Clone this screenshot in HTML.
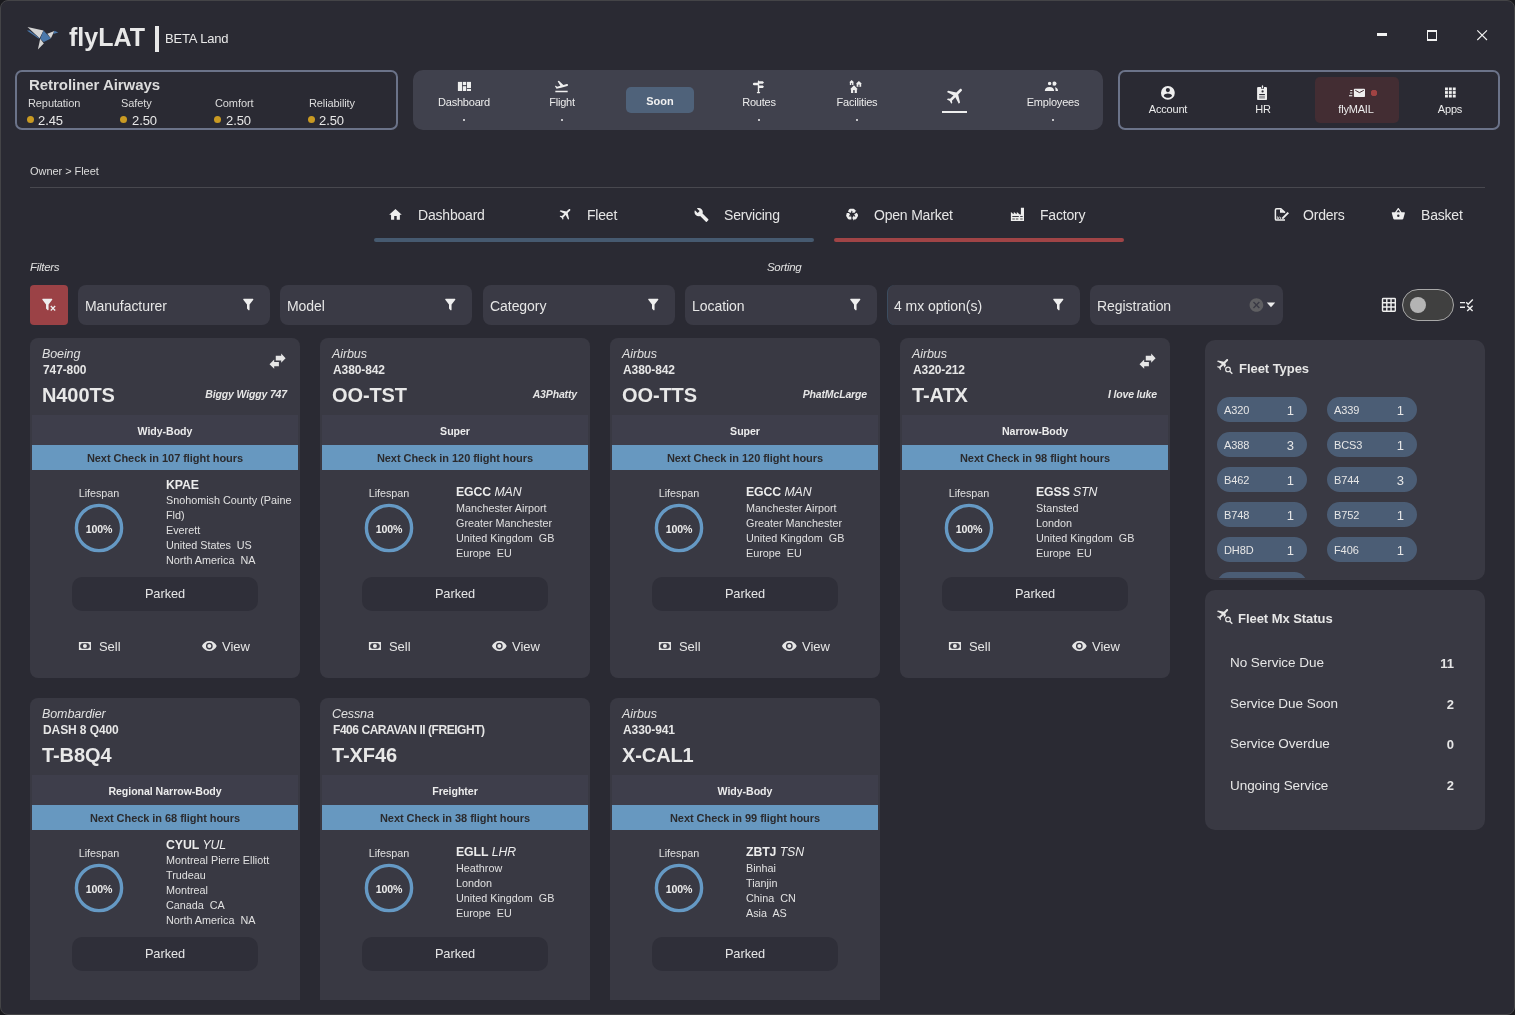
<!DOCTYPE html>
<html><head><meta charset="utf-8"><style>
html,body{margin:0;padding:0;width:1515px;height:1015px;overflow:hidden;background:#1a1a1e;}
.win{position:absolute;left:0;top:0;width:1513px;height:1013px;border:1px solid #444447;border-radius:8px;background:#2a2a33;overflow:hidden;}
.t{position:absolute;white-space:nowrap;line-height:1;font-family:"Liberation Sans",sans-serif;will-change:transform;}
.r{position:absolute;}
svg.r{overflow:visible}
</style></head><body><div class="win"><div class="r" style="left:-1px;top:-1px;width:1515px;height:1015px">
<div class='t' style='left:69.40px;top:25.44px;font-size:25px;font-weight:bold;font-style:normal;color:#e8e8e8;letter-spacing:0px;'>flyLAT</div>
<div class='r' style='left:155px;top:26px;width:4px;height:26px;background:#e8e8e8;border-radius:0px;'></div>
<div class='t' style='left:164.50px;top:32.00px;font-size:13px;font-weight:normal;font-style:normal;color:#e8e8e8;letter-spacing:-0.15px;'>BETA Land</div>
<div class='r' style='left:1377px;top:33px;width:10px;height:3px;background:#f0f0f0;border-radius:0px;'></div>
<div class='r' style='left:1427px;top:30px;width:8px;height:8px;border:1px solid #f0f0f0;border-top-width:2px'></div>
<div class='r' style='left:15px;top:70px;width:379px;height:56px;border:2px solid #6b7389;border-radius:7px'></div>
<div class='t' style='left:28.50px;top:77.10px;font-size:15px;font-weight:bold;font-style:normal;color:#dcdcdc;letter-spacing:-0.05px;'>Retroliner Airways</div>
<div class='t' style='left:27.60px;top:97.69px;font-size:11px;font-weight:normal;font-style:normal;color:#dcdcdc;letter-spacing:-0.1px;'>Reputation</div>
<div class='r' style='left:27.0px;top:116px;width:7.0px;height:7px;background:#c99a22;border-radius:4px;'></div>
<div class='t' style='left:38.40px;top:113.70px;font-size:13px;font-weight:normal;font-style:normal;color:#e8e8e8;letter-spacing:-0.1px;'>2.45</div>
<div class='t' style='left:121.00px;top:97.69px;font-size:11px;font-weight:normal;font-style:normal;color:#dcdcdc;letter-spacing:-0.1px;'>Safety</div>
<div class='r' style='left:120.4px;top:116px;width:7.0px;height:7px;background:#c99a22;border-radius:4px;'></div>
<div class='t' style='left:131.80px;top:113.70px;font-size:13px;font-weight:normal;font-style:normal;color:#e8e8e8;letter-spacing:-0.1px;'>2.50</div>
<div class='t' style='left:215.00px;top:97.69px;font-size:11px;font-weight:normal;font-style:normal;color:#dcdcdc;letter-spacing:-0.1px;'>Comfort</div>
<div class='r' style='left:214.4px;top:116px;width:7.0px;height:7px;background:#c99a22;border-radius:4px;'></div>
<div class='t' style='left:225.80px;top:113.70px;font-size:13px;font-weight:normal;font-style:normal;color:#e8e8e8;letter-spacing:-0.1px;'>2.50</div>
<div class='t' style='left:308.60px;top:97.69px;font-size:11px;font-weight:normal;font-style:normal;color:#dcdcdc;letter-spacing:-0.1px;'>Reliability</div>
<div class='r' style='left:308.0px;top:116px;width:7.0px;height:7px;background:#c99a22;border-radius:4px;'></div>
<div class='t' style='left:319.40px;top:113.70px;font-size:13px;font-weight:normal;font-style:normal;color:#e8e8e8;letter-spacing:-0.1px;'>2.50</div>
<div class='r' style='left:413px;top:70px;width:690px;height:60px;background:#40414d;border-radius:10px;'></div>
<div class='r' style='left:626px;top:87px;width:68px;height:26px;background:#4f627a;border-radius:5px;'></div>
<div class='t' style='left:360.00px;width:600px;text-align:center;top:95.69px;font-size:11px;font-weight:bold;font-style:normal;color:#f0f0f0;letter-spacing:0px;'>Soon</div>
<div class='t' style='left:164.40px;width:600px;text-align:center;top:96.69px;font-size:11px;font-weight:normal;font-style:normal;color:#ececec;letter-spacing:-0.2px;'>Dashboard</div>
<div class='r' style='left:463.4px;top:119px;width:2.0px;height:2px;background:#c4c4c8;border-radius:0px;'></div>
<div class='t' style='left:261.80px;width:600px;text-align:center;top:96.69px;font-size:11px;font-weight:normal;font-style:normal;color:#ececec;letter-spacing:-0.2px;'>Flight</div>
<div class='r' style='left:560.8px;top:119px;width:2.0px;height:2px;background:#c4c4c8;border-radius:0px;'></div>
<div class='t' style='left:458.80px;width:600px;text-align:center;top:96.69px;font-size:11px;font-weight:normal;font-style:normal;color:#ececec;letter-spacing:-0.2px;'>Routes</div>
<div class='r' style='left:757.8px;top:119px;width:2.0px;height:2px;background:#c4c4c8;border-radius:0px;'></div>
<div class='t' style='left:556.50px;width:600px;text-align:center;top:96.69px;font-size:11px;font-weight:normal;font-style:normal;color:#ececec;letter-spacing:-0.2px;'>Facilities</div>
<div class='r' style='left:855.5px;top:119px;width:2.0px;height:2px;background:#c4c4c8;border-radius:0px;'></div>
<div class='t' style='left:752.50px;width:600px;text-align:center;top:96.69px;font-size:11px;font-weight:normal;font-style:normal;color:#ececec;letter-spacing:-0.2px;'>Employees</div>
<div class='r' style='left:1051.5px;top:119px;width:2.0px;height:2px;background:#c4c4c8;border-radius:0px;'></div>
<div class='r' style='left:942px;top:111px;width:25px;height:2px;background:#eeeeee;border-radius:0px;'></div>
<div class='r' style='left:1118px;top:70px;width:378px;height:56px;border:2px solid #6b7389;border-radius:7px'></div>
<div class='r' style='left:1315px;top:77px;width:84px;height:46px;background:#432d33;border-radius:5px;'></div>
<div class='t' style='left:868.00px;width:600px;text-align:center;top:103.69px;font-size:11px;font-weight:normal;font-style:normal;color:#ececec;letter-spacing:-0.2px;'>Account</div>
<div class='t' style='left:962.50px;width:600px;text-align:center;top:103.69px;font-size:11px;font-weight:normal;font-style:normal;color:#ececec;letter-spacing:-0.2px;'>HR</div>
<div class='t' style='left:1056.40px;width:600px;text-align:center;top:103.69px;font-size:11px;font-weight:normal;font-style:normal;color:#ececec;letter-spacing:-0.2px;'>flyMAIL</div>
<div class='t' style='left:1150.30px;width:600px;text-align:center;top:103.69px;font-size:11px;font-weight:normal;font-style:normal;color:#ececec;letter-spacing:-0.2px;'>Apps</div>
<div class='r' style='left:1371px;top:90px;width:6px;height:6px;background:#b54545;border-radius:3px;'></div>
<div class='t' style='left:30.00px;top:166.29px;font-size:11px;font-weight:normal;font-style:normal;color:#dcdcdc;letter-spacing:-0.05px;'>Owner &gt; Fleet</div>
<div class='r' style='left:30px;top:187px;width:1455px;height:1px;background:#48484f;border-radius:0px;'></div>
<div class='t' style='left:417.70px;top:208.15px;font-size:14px;font-weight:normal;font-style:normal;color:#e6e6e6;letter-spacing:-0.2px;'>Dashboard</div>
<div class='t' style='left:586.60px;top:208.15px;font-size:14px;font-weight:normal;font-style:normal;color:#e6e6e6;letter-spacing:-0.2px;'>Fleet</div>
<div class='t' style='left:723.50px;top:208.15px;font-size:14px;font-weight:normal;font-style:normal;color:#e6e6e6;letter-spacing:-0.2px;'>Servicing</div>
<div class='t' style='left:873.70px;top:208.15px;font-size:14px;font-weight:normal;font-style:normal;color:#e6e6e6;letter-spacing:-0.2px;'>Open Market</div>
<div class='t' style='left:1039.60px;top:208.15px;font-size:14px;font-weight:normal;font-style:normal;color:#e6e6e6;letter-spacing:-0.2px;'>Factory</div>
<div class='t' style='left:1303.20px;top:208.15px;font-size:14px;font-weight:normal;font-style:normal;color:#e6e6e6;letter-spacing:-0.2px;'>Orders</div>
<div class='t' style='left:1420.50px;top:208.15px;font-size:14px;font-weight:normal;font-style:normal;color:#e6e6e6;letter-spacing:-0.2px;'>Basket</div>
<div class='r' style='left:374px;top:238.2px;width:440px;height:3.6000000000000227px;background:#465a70;border-radius:2px;'></div>
<div class='r' style='left:834px;top:238.2px;width:290px;height:3.6000000000000227px;background:#a04446;border-radius:2px;'></div>
<div class='t' style='left:30.00px;top:262.27px;font-size:11.5px;font-weight:normal;font-style:italic;color:#e0e0e0;letter-spacing:-0.3px;'>Filters</div>
<div class='t' style='left:767.40px;top:262.27px;font-size:11.5px;font-weight:normal;font-style:italic;color:#e0e0e0;letter-spacing:-0.3px;'>Sorting</div>
<div class='r' style='left:30px;top:285px;width:38px;height:40px;background:#9b4246;border-radius:4px;'></div>
<div class='r' style='left:78px;top:285px;width:192px;height:40px;background:#3a3a45;border-radius:8px;'></div>
<div class='t' style='left:85.20px;top:299.15px;font-size:14px;font-weight:normal;font-style:normal;color:#e6e6e6;letter-spacing:-0.05px;'>Manufacturer</div>
<div class='r' style='left:280px;top:285px;width:192px;height:40px;background:#3a3a45;border-radius:8px;'></div>
<div class='t' style='left:287.20px;top:299.15px;font-size:14px;font-weight:normal;font-style:normal;color:#e6e6e6;letter-spacing:-0.05px;'>Model</div>
<div class='r' style='left:483px;top:285px;width:192px;height:40px;background:#3a3a45;border-radius:8px;'></div>
<div class='t' style='left:490.20px;top:299.15px;font-size:14px;font-weight:normal;font-style:normal;color:#e6e6e6;letter-spacing:-0.05px;'>Category</div>
<div class='r' style='left:685px;top:285px;width:192px;height:40px;background:#3a3a45;border-radius:8px;'></div>
<div class='t' style='left:692.20px;top:299.15px;font-size:14px;font-weight:normal;font-style:normal;color:#e6e6e6;letter-spacing:-0.05px;'>Location</div>
<div class='r' style='left:887px;top:285px;width:193px;height:40px;background:#3a3a45;border-radius:8px;border-left:1px solid #3c4d60;box-sizing:border-box;'></div>
<div class='t' style='left:894.20px;top:299.15px;font-size:14px;font-weight:normal;font-style:normal;color:#e6e6e6;letter-spacing:-0.05px;'>4 mx option(s)</div>
<div class='r' style='left:1090px;top:285px;width:193px;height:40px;background:#3a3a45;border-radius:8px;'></div>
<div class='t' style='left:1097.20px;top:299.15px;font-size:14px;font-weight:normal;font-style:normal;color:#e6e6e6;letter-spacing:-0.05px;'>Registration</div>
<div class='r' style='left:1402px;top:289px;width:50px;height:30px;border:1px solid #a8a8a8;border-radius:16px;background:#404040'></div>
<div class='r' style='left:1410px;top:297px;width:16px;height:16px;background:#b4b4b4;border-radius:8px;'></div>
<div class='r' style='left:30px;top:338px;width:270px;height:340px;background:#393943;border-radius:8px;overflow:hidden'><div class='t' style='left:12.30px;top:10.22px;font-size:12.5px;font-weight:normal;font-style:italic;color:#e0e0e0;letter-spacing:-0.1px;'>Boeing</div><div class='t' style='left:12.70px;top:25.84px;font-size:12px;font-weight:bold;font-style:normal;color:#e6e6e6;letter-spacing:-0.1px;'>747-800</div><div class='t' style='left:11.50px;top:47.07px;font-size:20px;font-weight:bold;font-style:normal;color:#e8e8e8;letter-spacing:-0.1px;'>N400TS</div><div class='t' style='left:-343.00px;width:600px;text-align:right;top:51.11px;font-size:10.5px;font-weight:bold;font-style:italic;color:#e6e6e6;letter-spacing:-0.15px;'>Biggy Wiggy 747</div><div class='r' style='left:2px;top:77px;width:266px;height:30px;background:#3e3e4b;border-radius:0px;'></div><div class='t' style='left:-165.00px;width:600px;text-align:center;top:87.73px;font-size:10.6px;font-weight:bold;font-style:normal;color:#ececec;letter-spacing:-0.05px;'>Widy-Body</div><div class='r' style='left:2px;top:107px;width:266px;height:25px;background:#6798c0;border-radius:0px;'></div><div class='t' style='left:-165.00px;width:600px;text-align:center;top:115.29px;font-size:11px;font-weight:bold;font-style:normal;color:#2b2b2e;letter-spacing:-0.05px;'>Next Check in 107 flight hours</div><div class='t' style='left:-231.30px;width:600px;text-align:center;top:150.46px;font-size:10.8px;font-weight:normal;font-style:normal;color:#e0e0e0;letter-spacing:-0.05px;'>Lifespan</div><svg class='r' style='left:43px;top:164.4px;' width='52' height='52' viewBox='0 0 52 52'><circle cx='26' cy='26' r='22.6' stroke='#6599c4' stroke-width='3.4' fill='none'/></svg><div class='t' style='left:-231.20px;width:600px;text-align:center;top:186.03px;font-size:10.6px;font-weight:bold;font-style:normal;color:#ececec;letter-spacing:-0.1px;'>100%</div><div class='t' style='left:135.50px;top:140.79px;font-size:12.3px;font-weight:bold;font-style:normal;color:#ececec;letter-spacing:-0.1px;'>KPAE</div><div class='t' style='left:135.50px;top:157.06px;font-size:10.8px;font-weight:normal;font-style:normal;color:#e0e0e0;letter-spacing:0px;'>Snohomish County (Paine</div><div class='t' style='left:135.50px;top:172.06px;font-size:10.8px;font-weight:normal;font-style:normal;color:#e0e0e0;letter-spacing:0px;'>Fld)</div><div class='t' style='left:135.50px;top:187.06px;font-size:10.8px;font-weight:normal;font-style:normal;color:#e0e0e0;letter-spacing:0px;'>Everett</div><div class='t' style='left:135.50px;top:202.06px;font-size:10.8px;font-weight:normal;font-style:normal;color:#e0e0e0;letter-spacing:0px;'>United States&nbsp; US</div><div class='t' style='left:135.50px;top:217.06px;font-size:10.8px;font-weight:normal;font-style:normal;color:#e0e0e0;letter-spacing:0px;'>North America&nbsp; NA</div><div class='r' style='left:42px;top:238.7px;width:186px;height:34.30000000000001px;background:#2f2f39;border-radius:10px;'></div><div class='t' style='left:-165.00px;width:600px;text-align:center;top:250.16px;font-size:12.8px;font-weight:normal;font-style:normal;color:#e6e6e6;letter-spacing:-0.05px;'>Parked</div><div class='t' style='left:68.50px;top:302.00px;font-size:13px;font-weight:normal;font-style:normal;color:#e6e6e6;letter-spacing:-0.05px;'>Sell</div><div class='t' style='left:192.40px;top:302.00px;font-size:13px;font-weight:normal;font-style:normal;color:#e6e6e6;letter-spacing:-0.05px;'>View</div></div>
<div class='r' style='left:320px;top:338px;width:270px;height:340px;background:#393943;border-radius:8px;overflow:hidden'><div class='t' style='left:12.30px;top:10.22px;font-size:12.5px;font-weight:normal;font-style:italic;color:#e0e0e0;letter-spacing:-0.1px;'>Airbus</div><div class='t' style='left:12.70px;top:25.84px;font-size:12px;font-weight:bold;font-style:normal;color:#e6e6e6;letter-spacing:-0.1px;'>A380-842</div><div class='t' style='left:11.50px;top:47.07px;font-size:20px;font-weight:bold;font-style:normal;color:#e8e8e8;letter-spacing:-0.1px;'>OO-TST</div><div class='t' style='left:-343.00px;width:600px;text-align:right;top:51.11px;font-size:10.5px;font-weight:bold;font-style:italic;color:#e6e6e6;letter-spacing:-0.15px;'>A3Phatty</div><div class='r' style='left:2px;top:77px;width:266px;height:30px;background:#3e3e4b;border-radius:0px;'></div><div class='t' style='left:-165.00px;width:600px;text-align:center;top:87.73px;font-size:10.6px;font-weight:bold;font-style:normal;color:#ececec;letter-spacing:-0.05px;'>Super</div><div class='r' style='left:2px;top:107px;width:266px;height:25px;background:#6798c0;border-radius:0px;'></div><div class='t' style='left:-165.00px;width:600px;text-align:center;top:115.29px;font-size:11px;font-weight:bold;font-style:normal;color:#2b2b2e;letter-spacing:-0.05px;'>Next Check in 120 flight hours</div><div class='t' style='left:-231.30px;width:600px;text-align:center;top:150.46px;font-size:10.8px;font-weight:normal;font-style:normal;color:#e0e0e0;letter-spacing:-0.05px;'>Lifespan</div><svg class='r' style='left:43px;top:164.4px;' width='52' height='52' viewBox='0 0 52 52'><circle cx='26' cy='26' r='22.6' stroke='#6599c4' stroke-width='3.4' fill='none'/></svg><div class='t' style='left:-231.20px;width:600px;text-align:center;top:186.03px;font-size:10.6px;font-weight:bold;font-style:normal;color:#ececec;letter-spacing:-0.1px;'>100%</div><div class='t' style='left:135.50px;top:148.29px;font-size:12.3px;font-weight:bold;font-style:normal;color:#ececec;letter-spacing:-0.1px;'>EGCC&nbsp;<span style='font-weight:normal;font-style:italic'>MAN</span></div><div class='t' style='left:135.50px;top:164.56px;font-size:10.8px;font-weight:normal;font-style:normal;color:#e0e0e0;letter-spacing:0px;'>Manchester Airport</div><div class='t' style='left:135.50px;top:179.56px;font-size:10.8px;font-weight:normal;font-style:normal;color:#e0e0e0;letter-spacing:0px;'>Greater Manchester</div><div class='t' style='left:135.50px;top:194.56px;font-size:10.8px;font-weight:normal;font-style:normal;color:#e0e0e0;letter-spacing:0px;'>United Kingdom&nbsp; GB</div><div class='t' style='left:135.50px;top:209.56px;font-size:10.8px;font-weight:normal;font-style:normal;color:#e0e0e0;letter-spacing:0px;'>Europe&nbsp; EU</div><div class='r' style='left:42px;top:238.7px;width:186px;height:34.30000000000001px;background:#2f2f39;border-radius:10px;'></div><div class='t' style='left:-165.00px;width:600px;text-align:center;top:250.16px;font-size:12.8px;font-weight:normal;font-style:normal;color:#e6e6e6;letter-spacing:-0.05px;'>Parked</div><div class='t' style='left:68.50px;top:302.00px;font-size:13px;font-weight:normal;font-style:normal;color:#e6e6e6;letter-spacing:-0.05px;'>Sell</div><div class='t' style='left:192.40px;top:302.00px;font-size:13px;font-weight:normal;font-style:normal;color:#e6e6e6;letter-spacing:-0.05px;'>View</div></div>
<div class='r' style='left:610px;top:338px;width:270px;height:340px;background:#393943;border-radius:8px;overflow:hidden'><div class='t' style='left:12.30px;top:10.22px;font-size:12.5px;font-weight:normal;font-style:italic;color:#e0e0e0;letter-spacing:-0.1px;'>Airbus</div><div class='t' style='left:12.70px;top:25.84px;font-size:12px;font-weight:bold;font-style:normal;color:#e6e6e6;letter-spacing:-0.1px;'>A380-842</div><div class='t' style='left:11.50px;top:47.07px;font-size:20px;font-weight:bold;font-style:normal;color:#e8e8e8;letter-spacing:-0.1px;'>OO-TTS</div><div class='t' style='left:-343.00px;width:600px;text-align:right;top:51.11px;font-size:10.5px;font-weight:bold;font-style:italic;color:#e6e6e6;letter-spacing:-0.15px;'>PhatMcLarge</div><div class='r' style='left:2px;top:77px;width:266px;height:30px;background:#3e3e4b;border-radius:0px;'></div><div class='t' style='left:-165.00px;width:600px;text-align:center;top:87.73px;font-size:10.6px;font-weight:bold;font-style:normal;color:#ececec;letter-spacing:-0.05px;'>Super</div><div class='r' style='left:2px;top:107px;width:266px;height:25px;background:#6798c0;border-radius:0px;'></div><div class='t' style='left:-165.00px;width:600px;text-align:center;top:115.29px;font-size:11px;font-weight:bold;font-style:normal;color:#2b2b2e;letter-spacing:-0.05px;'>Next Check in 120 flight hours</div><div class='t' style='left:-231.30px;width:600px;text-align:center;top:150.46px;font-size:10.8px;font-weight:normal;font-style:normal;color:#e0e0e0;letter-spacing:-0.05px;'>Lifespan</div><svg class='r' style='left:43px;top:164.4px;' width='52' height='52' viewBox='0 0 52 52'><circle cx='26' cy='26' r='22.6' stroke='#6599c4' stroke-width='3.4' fill='none'/></svg><div class='t' style='left:-231.20px;width:600px;text-align:center;top:186.03px;font-size:10.6px;font-weight:bold;font-style:normal;color:#ececec;letter-spacing:-0.1px;'>100%</div><div class='t' style='left:135.50px;top:148.29px;font-size:12.3px;font-weight:bold;font-style:normal;color:#ececec;letter-spacing:-0.1px;'>EGCC&nbsp;<span style='font-weight:normal;font-style:italic'>MAN</span></div><div class='t' style='left:135.50px;top:164.56px;font-size:10.8px;font-weight:normal;font-style:normal;color:#e0e0e0;letter-spacing:0px;'>Manchester Airport</div><div class='t' style='left:135.50px;top:179.56px;font-size:10.8px;font-weight:normal;font-style:normal;color:#e0e0e0;letter-spacing:0px;'>Greater Manchester</div><div class='t' style='left:135.50px;top:194.56px;font-size:10.8px;font-weight:normal;font-style:normal;color:#e0e0e0;letter-spacing:0px;'>United Kingdom&nbsp; GB</div><div class='t' style='left:135.50px;top:209.56px;font-size:10.8px;font-weight:normal;font-style:normal;color:#e0e0e0;letter-spacing:0px;'>Europe&nbsp; EU</div><div class='r' style='left:42px;top:238.7px;width:186px;height:34.30000000000001px;background:#2f2f39;border-radius:10px;'></div><div class='t' style='left:-165.00px;width:600px;text-align:center;top:250.16px;font-size:12.8px;font-weight:normal;font-style:normal;color:#e6e6e6;letter-spacing:-0.05px;'>Parked</div><div class='t' style='left:68.50px;top:302.00px;font-size:13px;font-weight:normal;font-style:normal;color:#e6e6e6;letter-spacing:-0.05px;'>Sell</div><div class='t' style='left:192.40px;top:302.00px;font-size:13px;font-weight:normal;font-style:normal;color:#e6e6e6;letter-spacing:-0.05px;'>View</div></div>
<div class='r' style='left:900px;top:338px;width:270px;height:340px;background:#393943;border-radius:8px;overflow:hidden'><div class='t' style='left:12.30px;top:10.22px;font-size:12.5px;font-weight:normal;font-style:italic;color:#e0e0e0;letter-spacing:-0.1px;'>Airbus</div><div class='t' style='left:12.70px;top:25.84px;font-size:12px;font-weight:bold;font-style:normal;color:#e6e6e6;letter-spacing:-0.1px;'>A320-212</div><div class='t' style='left:11.50px;top:47.07px;font-size:20px;font-weight:bold;font-style:normal;color:#e8e8e8;letter-spacing:-0.1px;'>T-ATX</div><div class='t' style='left:-343.00px;width:600px;text-align:right;top:51.11px;font-size:10.5px;font-weight:bold;font-style:italic;color:#e6e6e6;letter-spacing:-0.15px;'>I love luke</div><div class='r' style='left:2px;top:77px;width:266px;height:30px;background:#3e3e4b;border-radius:0px;'></div><div class='t' style='left:-165.00px;width:600px;text-align:center;top:87.73px;font-size:10.6px;font-weight:bold;font-style:normal;color:#ececec;letter-spacing:-0.05px;'>Narrow-Body</div><div class='r' style='left:2px;top:107px;width:266px;height:25px;background:#6798c0;border-radius:0px;'></div><div class='t' style='left:-165.00px;width:600px;text-align:center;top:115.29px;font-size:11px;font-weight:bold;font-style:normal;color:#2b2b2e;letter-spacing:-0.05px;'>Next Check in 98 flight hours</div><div class='t' style='left:-231.30px;width:600px;text-align:center;top:150.46px;font-size:10.8px;font-weight:normal;font-style:normal;color:#e0e0e0;letter-spacing:-0.05px;'>Lifespan</div><svg class='r' style='left:43px;top:164.4px;' width='52' height='52' viewBox='0 0 52 52'><circle cx='26' cy='26' r='22.6' stroke='#6599c4' stroke-width='3.4' fill='none'/></svg><div class='t' style='left:-231.20px;width:600px;text-align:center;top:186.03px;font-size:10.6px;font-weight:bold;font-style:normal;color:#ececec;letter-spacing:-0.1px;'>100%</div><div class='t' style='left:135.50px;top:148.29px;font-size:12.3px;font-weight:bold;font-style:normal;color:#ececec;letter-spacing:-0.1px;'>EGSS&nbsp;<span style='font-weight:normal;font-style:italic'>STN</span></div><div class='t' style='left:135.50px;top:164.56px;font-size:10.8px;font-weight:normal;font-style:normal;color:#e0e0e0;letter-spacing:0px;'>Stansted</div><div class='t' style='left:135.50px;top:179.56px;font-size:10.8px;font-weight:normal;font-style:normal;color:#e0e0e0;letter-spacing:0px;'>London</div><div class='t' style='left:135.50px;top:194.56px;font-size:10.8px;font-weight:normal;font-style:normal;color:#e0e0e0;letter-spacing:0px;'>United Kingdom&nbsp; GB</div><div class='t' style='left:135.50px;top:209.56px;font-size:10.8px;font-weight:normal;font-style:normal;color:#e0e0e0;letter-spacing:0px;'>Europe&nbsp; EU</div><div class='r' style='left:42px;top:238.7px;width:186px;height:34.30000000000001px;background:#2f2f39;border-radius:10px;'></div><div class='t' style='left:-165.00px;width:600px;text-align:center;top:250.16px;font-size:12.8px;font-weight:normal;font-style:normal;color:#e6e6e6;letter-spacing:-0.05px;'>Parked</div><div class='t' style='left:68.50px;top:302.00px;font-size:13px;font-weight:normal;font-style:normal;color:#e6e6e6;letter-spacing:-0.05px;'>Sell</div><div class='t' style='left:192.40px;top:302.00px;font-size:13px;font-weight:normal;font-style:normal;color:#e6e6e6;letter-spacing:-0.05px;'>View</div></div>
<div class='r' style='left:30px;top:698px;width:270px;height:302px;background:#393943;border-radius:8px 8px 0 0;overflow:hidden'><div class='t' style='left:12.30px;top:10.22px;font-size:12.5px;font-weight:normal;font-style:italic;color:#e0e0e0;letter-spacing:-0.1px;'>Bombardier</div><div class='t' style='left:12.70px;top:25.84px;font-size:12px;font-weight:bold;font-style:normal;color:#e6e6e6;letter-spacing:-0.1px;'>DASH 8 Q400</div><div class='t' style='left:11.50px;top:47.07px;font-size:20px;font-weight:bold;font-style:normal;color:#e8e8e8;letter-spacing:-0.1px;'>T-B8Q4</div><div class='r' style='left:2px;top:77px;width:266px;height:30px;background:#3e3e4b;border-radius:0px;'></div><div class='t' style='left:-165.00px;width:600px;text-align:center;top:87.73px;font-size:10.6px;font-weight:bold;font-style:normal;color:#ececec;letter-spacing:-0.05px;'>Regional Narrow-Body</div><div class='r' style='left:2px;top:107px;width:266px;height:25px;background:#6798c0;border-radius:0px;'></div><div class='t' style='left:-165.00px;width:600px;text-align:center;top:115.29px;font-size:11px;font-weight:bold;font-style:normal;color:#2b2b2e;letter-spacing:-0.05px;'>Next Check in 68 flight hours</div><div class='t' style='left:-231.30px;width:600px;text-align:center;top:150.46px;font-size:10.8px;font-weight:normal;font-style:normal;color:#e0e0e0;letter-spacing:-0.05px;'>Lifespan</div><svg class='r' style='left:43px;top:164.4px;' width='52' height='52' viewBox='0 0 52 52'><circle cx='26' cy='26' r='22.6' stroke='#6599c4' stroke-width='3.4' fill='none'/></svg><div class='t' style='left:-231.20px;width:600px;text-align:center;top:186.03px;font-size:10.6px;font-weight:bold;font-style:normal;color:#ececec;letter-spacing:-0.1px;'>100%</div><div class='t' style='left:135.50px;top:140.79px;font-size:12.3px;font-weight:bold;font-style:normal;color:#ececec;letter-spacing:-0.1px;'>CYUL&nbsp;<span style='font-weight:normal;font-style:italic'>YUL</span></div><div class='t' style='left:135.50px;top:157.06px;font-size:10.8px;font-weight:normal;font-style:normal;color:#e0e0e0;letter-spacing:0px;'>Montreal Pierre Elliott</div><div class='t' style='left:135.50px;top:172.06px;font-size:10.8px;font-weight:normal;font-style:normal;color:#e0e0e0;letter-spacing:0px;'>Trudeau</div><div class='t' style='left:135.50px;top:187.06px;font-size:10.8px;font-weight:normal;font-style:normal;color:#e0e0e0;letter-spacing:0px;'>Montreal</div><div class='t' style='left:135.50px;top:202.06px;font-size:10.8px;font-weight:normal;font-style:normal;color:#e0e0e0;letter-spacing:0px;'>Canada&nbsp; CA</div><div class='t' style='left:135.50px;top:217.06px;font-size:10.8px;font-weight:normal;font-style:normal;color:#e0e0e0;letter-spacing:0px;'>North America&nbsp; NA</div><div class='r' style='left:42px;top:238.7px;width:186px;height:34.30000000000001px;background:#2f2f39;border-radius:10px;'></div><div class='t' style='left:-165.00px;width:600px;text-align:center;top:250.16px;font-size:12.8px;font-weight:normal;font-style:normal;color:#e6e6e6;letter-spacing:-0.05px;'>Parked</div><div class='t' style='left:68.50px;top:302.00px;font-size:13px;font-weight:normal;font-style:normal;color:#e6e6e6;letter-spacing:-0.05px;'>Sell</div><div class='t' style='left:192.40px;top:302.00px;font-size:13px;font-weight:normal;font-style:normal;color:#e6e6e6;letter-spacing:-0.05px;'>View</div></div>
<div class='r' style='left:320px;top:698px;width:270px;height:302px;background:#393943;border-radius:8px 8px 0 0;overflow:hidden'><div class='t' style='left:12.30px;top:10.22px;font-size:12.5px;font-weight:normal;font-style:italic;color:#e0e0e0;letter-spacing:-0.1px;'>Cessna</div><div class='t' style='left:12.70px;top:25.84px;font-size:12px;font-weight:bold;font-style:normal;color:#e6e6e6;letter-spacing:-0.45px;'>F406 CARAVAN II (FREIGHT)</div><div class='t' style='left:11.50px;top:47.07px;font-size:20px;font-weight:bold;font-style:normal;color:#e8e8e8;letter-spacing:-0.1px;'>T-XF46</div><div class='r' style='left:2px;top:77px;width:266px;height:30px;background:#3e3e4b;border-radius:0px;'></div><div class='t' style='left:-165.00px;width:600px;text-align:center;top:87.73px;font-size:10.6px;font-weight:bold;font-style:normal;color:#ececec;letter-spacing:-0.05px;'>Freighter</div><div class='r' style='left:2px;top:107px;width:266px;height:25px;background:#6798c0;border-radius:0px;'></div><div class='t' style='left:-165.00px;width:600px;text-align:center;top:115.29px;font-size:11px;font-weight:bold;font-style:normal;color:#2b2b2e;letter-spacing:-0.05px;'>Next Check in 38 flight hours</div><div class='t' style='left:-231.30px;width:600px;text-align:center;top:150.46px;font-size:10.8px;font-weight:normal;font-style:normal;color:#e0e0e0;letter-spacing:-0.05px;'>Lifespan</div><svg class='r' style='left:43px;top:164.4px;' width='52' height='52' viewBox='0 0 52 52'><circle cx='26' cy='26' r='22.6' stroke='#6599c4' stroke-width='3.4' fill='none'/></svg><div class='t' style='left:-231.20px;width:600px;text-align:center;top:186.03px;font-size:10.6px;font-weight:bold;font-style:normal;color:#ececec;letter-spacing:-0.1px;'>100%</div><div class='t' style='left:135.50px;top:148.29px;font-size:12.3px;font-weight:bold;font-style:normal;color:#ececec;letter-spacing:-0.1px;'>EGLL&nbsp;<span style='font-weight:normal;font-style:italic'>LHR</span></div><div class='t' style='left:135.50px;top:164.56px;font-size:10.8px;font-weight:normal;font-style:normal;color:#e0e0e0;letter-spacing:0px;'>Heathrow</div><div class='t' style='left:135.50px;top:179.56px;font-size:10.8px;font-weight:normal;font-style:normal;color:#e0e0e0;letter-spacing:0px;'>London</div><div class='t' style='left:135.50px;top:194.56px;font-size:10.8px;font-weight:normal;font-style:normal;color:#e0e0e0;letter-spacing:0px;'>United Kingdom&nbsp; GB</div><div class='t' style='left:135.50px;top:209.56px;font-size:10.8px;font-weight:normal;font-style:normal;color:#e0e0e0;letter-spacing:0px;'>Europe&nbsp; EU</div><div class='r' style='left:42px;top:238.7px;width:186px;height:34.30000000000001px;background:#2f2f39;border-radius:10px;'></div><div class='t' style='left:-165.00px;width:600px;text-align:center;top:250.16px;font-size:12.8px;font-weight:normal;font-style:normal;color:#e6e6e6;letter-spacing:-0.05px;'>Parked</div><div class='t' style='left:68.50px;top:302.00px;font-size:13px;font-weight:normal;font-style:normal;color:#e6e6e6;letter-spacing:-0.05px;'>Sell</div><div class='t' style='left:192.40px;top:302.00px;font-size:13px;font-weight:normal;font-style:normal;color:#e6e6e6;letter-spacing:-0.05px;'>View</div></div>
<div class='r' style='left:610px;top:698px;width:270px;height:302px;background:#393943;border-radius:8px 8px 0 0;overflow:hidden'><div class='t' style='left:12.30px;top:10.22px;font-size:12.5px;font-weight:normal;font-style:italic;color:#e0e0e0;letter-spacing:-0.1px;'>Airbus</div><div class='t' style='left:12.70px;top:25.84px;font-size:12px;font-weight:bold;font-style:normal;color:#e6e6e6;letter-spacing:-0.1px;'>A330-941</div><div class='t' style='left:11.50px;top:47.07px;font-size:20px;font-weight:bold;font-style:normal;color:#e8e8e8;letter-spacing:-0.1px;'>X-CAL1</div><div class='r' style='left:2px;top:77px;width:266px;height:30px;background:#3e3e4b;border-radius:0px;'></div><div class='t' style='left:-165.00px;width:600px;text-align:center;top:87.73px;font-size:10.6px;font-weight:bold;font-style:normal;color:#ececec;letter-spacing:-0.05px;'>Widy-Body</div><div class='r' style='left:2px;top:107px;width:266px;height:25px;background:#6798c0;border-radius:0px;'></div><div class='t' style='left:-165.00px;width:600px;text-align:center;top:115.29px;font-size:11px;font-weight:bold;font-style:normal;color:#2b2b2e;letter-spacing:-0.05px;'>Next Check in 99 flight hours</div><div class='t' style='left:-231.30px;width:600px;text-align:center;top:150.46px;font-size:10.8px;font-weight:normal;font-style:normal;color:#e0e0e0;letter-spacing:-0.05px;'>Lifespan</div><svg class='r' style='left:43px;top:164.4px;' width='52' height='52' viewBox='0 0 52 52'><circle cx='26' cy='26' r='22.6' stroke='#6599c4' stroke-width='3.4' fill='none'/></svg><div class='t' style='left:-231.20px;width:600px;text-align:center;top:186.03px;font-size:10.6px;font-weight:bold;font-style:normal;color:#ececec;letter-spacing:-0.1px;'>100%</div><div class='t' style='left:135.50px;top:148.29px;font-size:12.3px;font-weight:bold;font-style:normal;color:#ececec;letter-spacing:-0.1px;'>ZBTJ&nbsp;<span style='font-weight:normal;font-style:italic'>TSN</span></div><div class='t' style='left:135.50px;top:164.56px;font-size:10.8px;font-weight:normal;font-style:normal;color:#e0e0e0;letter-spacing:0px;'>Binhai</div><div class='t' style='left:135.50px;top:179.56px;font-size:10.8px;font-weight:normal;font-style:normal;color:#e0e0e0;letter-spacing:0px;'>Tianjin</div><div class='t' style='left:135.50px;top:194.56px;font-size:10.8px;font-weight:normal;font-style:normal;color:#e0e0e0;letter-spacing:0px;'>China&nbsp; CN</div><div class='t' style='left:135.50px;top:209.56px;font-size:10.8px;font-weight:normal;font-style:normal;color:#e0e0e0;letter-spacing:0px;'>Asia&nbsp; AS</div><div class='r' style='left:42px;top:238.7px;width:186px;height:34.30000000000001px;background:#2f2f39;border-radius:10px;'></div><div class='t' style='left:-165.00px;width:600px;text-align:center;top:250.16px;font-size:12.8px;font-weight:normal;font-style:normal;color:#e6e6e6;letter-spacing:-0.05px;'>Parked</div><div class='t' style='left:68.50px;top:302.00px;font-size:13px;font-weight:normal;font-style:normal;color:#e6e6e6;letter-spacing:-0.05px;'>Sell</div><div class='t' style='left:192.40px;top:302.00px;font-size:13px;font-weight:normal;font-style:normal;color:#e6e6e6;letter-spacing:-0.05px;'>View</div></div>
<div class='r' style='left:1205px;top:340px;width:280px;height:240px;background:#393943;border-radius:10px;'></div>
<div class='t' style='left:1238.50px;top:362.00px;font-size:13px;font-weight:bold;font-style:normal;color:#e6e6e6;letter-spacing:-0.05px;'>Fleet Types</div>
<div class='r' style='left:1217px;top:397px;width:90px;height:25px;background:#4b5d75;border-radius:12.5px;'></div>
<div class='t' style='left:1224.00px;top:404.69px;font-size:11px;font-weight:normal;font-style:normal;color:#e6e6e6;letter-spacing:-0.1px;'>A320</div>
<div class='t' style='left:694.00px;width:600px;text-align:right;top:403.70px;font-size:13px;font-weight:normal;font-style:normal;color:#e6e6e6;letter-spacing:0px;'>1</div>
<div class='r' style='left:1327px;top:397px;width:90px;height:25px;background:#4b5d75;border-radius:12.5px;'></div>
<div class='t' style='left:1334.00px;top:404.69px;font-size:11px;font-weight:normal;font-style:normal;color:#e6e6e6;letter-spacing:-0.1px;'>A339</div>
<div class='t' style='left:804.00px;width:600px;text-align:right;top:403.70px;font-size:13px;font-weight:normal;font-style:normal;color:#e6e6e6;letter-spacing:0px;'>1</div>
<div class='r' style='left:1217px;top:432px;width:90px;height:25px;background:#4b5d75;border-radius:12.5px;'></div>
<div class='t' style='left:1224.00px;top:439.69px;font-size:11px;font-weight:normal;font-style:normal;color:#e6e6e6;letter-spacing:-0.1px;'>A388</div>
<div class='t' style='left:694.00px;width:600px;text-align:right;top:438.70px;font-size:13px;font-weight:normal;font-style:normal;color:#e6e6e6;letter-spacing:0px;'>3</div>
<div class='r' style='left:1327px;top:432px;width:90px;height:25px;background:#4b5d75;border-radius:12.5px;'></div>
<div class='t' style='left:1334.00px;top:439.69px;font-size:11px;font-weight:normal;font-style:normal;color:#e6e6e6;letter-spacing:-0.1px;'>BCS3</div>
<div class='t' style='left:804.00px;width:600px;text-align:right;top:438.70px;font-size:13px;font-weight:normal;font-style:normal;color:#e6e6e6;letter-spacing:0px;'>1</div>
<div class='r' style='left:1217px;top:467px;width:90px;height:25px;background:#4b5d75;border-radius:12.5px;'></div>
<div class='t' style='left:1224.00px;top:474.69px;font-size:11px;font-weight:normal;font-style:normal;color:#e6e6e6;letter-spacing:-0.1px;'>B462</div>
<div class='t' style='left:694.00px;width:600px;text-align:right;top:473.70px;font-size:13px;font-weight:normal;font-style:normal;color:#e6e6e6;letter-spacing:0px;'>1</div>
<div class='r' style='left:1327px;top:467px;width:90px;height:25px;background:#4b5d75;border-radius:12.5px;'></div>
<div class='t' style='left:1334.00px;top:474.69px;font-size:11px;font-weight:normal;font-style:normal;color:#e6e6e6;letter-spacing:-0.1px;'>B744</div>
<div class='t' style='left:804.00px;width:600px;text-align:right;top:473.70px;font-size:13px;font-weight:normal;font-style:normal;color:#e6e6e6;letter-spacing:0px;'>3</div>
<div class='r' style='left:1217px;top:502px;width:90px;height:25px;background:#4b5d75;border-radius:12.5px;'></div>
<div class='t' style='left:1224.00px;top:509.69px;font-size:11px;font-weight:normal;font-style:normal;color:#e6e6e6;letter-spacing:-0.1px;'>B748</div>
<div class='t' style='left:694.00px;width:600px;text-align:right;top:508.70px;font-size:13px;font-weight:normal;font-style:normal;color:#e6e6e6;letter-spacing:0px;'>1</div>
<div class='r' style='left:1327px;top:502px;width:90px;height:25px;background:#4b5d75;border-radius:12.5px;'></div>
<div class='t' style='left:1334.00px;top:509.69px;font-size:11px;font-weight:normal;font-style:normal;color:#e6e6e6;letter-spacing:-0.1px;'>B752</div>
<div class='t' style='left:804.00px;width:600px;text-align:right;top:508.70px;font-size:13px;font-weight:normal;font-style:normal;color:#e6e6e6;letter-spacing:0px;'>1</div>
<div class='r' style='left:1217px;top:537px;width:90px;height:25px;background:#4b5d75;border-radius:12.5px;'></div>
<div class='t' style='left:1224.00px;top:544.69px;font-size:11px;font-weight:normal;font-style:normal;color:#e6e6e6;letter-spacing:-0.1px;'>DH8D</div>
<div class='t' style='left:694.00px;width:600px;text-align:right;top:543.70px;font-size:13px;font-weight:normal;font-style:normal;color:#e6e6e6;letter-spacing:0px;'>1</div>
<div class='r' style='left:1327px;top:537px;width:90px;height:25px;background:#4b5d75;border-radius:12.5px;'></div>
<div class='t' style='left:1334.00px;top:544.69px;font-size:11px;font-weight:normal;font-style:normal;color:#e6e6e6;letter-spacing:-0.1px;'>F406</div>
<div class='t' style='left:804.00px;width:600px;text-align:right;top:543.70px;font-size:13px;font-weight:normal;font-style:normal;color:#e6e6e6;letter-spacing:0px;'>1</div>
<div class='r' style='left:1217px;top:572px;width:90px;height:6px;overflow:hidden'><div class='r' style='left:0;top:0;width:90px;height:25px;background:#4b5d75;border-radius:12.5px'></div></div>
<div class='r' style='left:1205px;top:590px;width:280px;height:240px;background:#393943;border-radius:10px;'></div>
<div class='t' style='left:1238.40px;top:611.60px;font-size:13px;font-weight:bold;font-style:normal;color:#e6e6e6;letter-spacing:-0.05px;'>Fleet Mx Status</div>
<div class='t' style='left:1230.30px;top:656.37px;font-size:13.5px;font-weight:normal;font-style:normal;color:#e6e6e6;letter-spacing:-0.05px;'>No Service Due</div>
<div class='t' style='left:853.70px;width:600px;text-align:right;top:656.80px;font-size:13px;font-weight:bold;font-style:normal;color:#e6e6e6;letter-spacing:0px;'>11</div>
<div class='t' style='left:1230.30px;top:697.37px;font-size:13.5px;font-weight:normal;font-style:normal;color:#e6e6e6;letter-spacing:-0.05px;'>Service Due Soon</div>
<div class='t' style='left:853.70px;width:600px;text-align:right;top:697.80px;font-size:13px;font-weight:bold;font-style:normal;color:#e6e6e6;letter-spacing:0px;'>2</div>
<div class='t' style='left:1230.30px;top:737.37px;font-size:13.5px;font-weight:normal;font-style:normal;color:#e6e6e6;letter-spacing:-0.05px;'>Service Overdue</div>
<div class='t' style='left:853.70px;width:600px;text-align:right;top:737.80px;font-size:13px;font-weight:bold;font-style:normal;color:#e6e6e6;letter-spacing:0px;'>0</div>
<div class='t' style='left:1230.30px;top:778.57px;font-size:13.5px;font-weight:normal;font-style:normal;color:#e6e6e6;letter-spacing:-0.05px;'>Ungoing Service</div>
<div class='t' style='left:853.70px;width:600px;text-align:right;top:779.00px;font-size:13px;font-weight:bold;font-style:normal;color:#e6e6e6;letter-spacing:0px;'>2</div>
<svg class='r' style='left:0;top:0' width='1515' height='1015'><g transform='translate(25,25)'><polygon points='2.5,1.9 18.5,5.5 14.6,13.2' fill='#d4d4d4'/><polygon points='1.9,5.5 4.5,5.5 14.6,13.2 13.5,13.6' fill='#4a78ab'/><polygon points='18.5,5.5 25.9,13.5 18.8,17 15.2,13.8' fill='#4a78ab'/><polygon points='22.3,8.7 29.4,6 25.9,13.2' fill='#d4d4d4'/><polygon points='29.4,5.8 33.3,7.4 28.3,9' fill='#4a78ab'/><polygon points='15.2,13.8 18.8,18.5 12.9,24.4' fill='#d4d4d4'/></g><rect x='1377' y='33' width='10' height='3' fill='#f2f2f2'/><rect x='1427.5' y='30.5' width='9' height='9' stroke='#f2f2f2' stroke-width='1' fill='none'/><rect x='1427' y='30' width='10' height='2' fill='#f2f2f2'/><path d='M1477.3,30.3 L1487,40 M1487,30.3 L1477.3,40' stroke='#f2f2f2' stroke-width='1.1'/><rect x='457.9' y='81.9' width='4.1' height='9.1' fill='#eee'/><rect x='462.8' y='81.9' width='3.4' height='3.2' fill='#eee'/><rect x='462.8' y='86.2' width='3.4' height='4.8' fill='#eee'/><rect x='467' y='81.9' width='4' height='6.1' fill='#eee'/><rect x='467' y='88.9' width='4' height='2.1' fill='#eee'/><path transform='translate(553.7,78.5) scale(0.65)' d='M2.5,19H21.5V21H2.5V19M22.07,9.64C21.86,8.84 21.03,8.36 20.23,8.58L14.92,10L8,3.57L6.07,4.08L10.21,11.25L5.24,12.58L3.27,11.04L1.82,11.43L3.64,14.59L4.41,15.92L6.01,15.5L11.32,14.07L15.66,12.91L20.97,11.5C21.78,11.27 22.25,10.45 22.07,9.64Z' fill='#eeeeee' /><rect x='757.8' y='81.5' width='1.4' height='11' fill='#eee'/><path d='M757.8,82 L758.5,79.9 L759.2,82 Z' fill='#eee'/><rect x='756.8' y='92' width='3.4' height='1.2' rx='0.6' fill='#eee'/><path d='M758,82.7 H754.2 Q752.9,82.7 752.9,84 Q752.9,85.3 754.2,85.3 H758 Z' fill='#eee'/><path d='M759,81.3 H762.8 L764,82.55 L762.8,83.8 H759 Z' fill='#eee'/><path d='M759,85.5 H762.8 L764,86.75 L762.8,88 H759 Z' fill='#eee'/><path d='M851.65,79.9 L854.0,82.30000000000001 L853.436,82.30000000000001 L853.436,84.9 L849.8639999999999,84.9 L849.8639999999999,82.30000000000001 L849.3,82.30000000000001 Z' fill='#eee'/><rect x='851.1999999999999' y='83.10000000000001' width='0.9' height='1.8' fill='#40414d'/><path d='M858.9,80.9 L861.9,83.7 L861.18,83.7 L861.18,86.80000000000001 L856.62,86.80000000000001 L856.62,83.7 L855.9,83.7 Z' fill='#eee'/><rect x='858.3' y='84.60000000000001' width='1.2' height='2.2' fill='#40414d'/><path d='M853.95,85.3 L857.8000000000001,89.2 L856.8760000000001,89.2 L856.8760000000001,92.89999999999999 L851.024,92.89999999999999 L851.024,89.2 L850.1,89.2 Z' fill='#eee'/><rect x='853.1500000000001' y='90.1' width='1.6' height='2.8' fill='#40414d'/><path transform='translate(943.5,85.7) scale(0.88)' d='M20.56 3.91C21.15 4.5 21.15 5.45 20.56 6.03L16.67 9.92L18.79 19.11L17.38 20.53L13.5 13.1L9.6 17L9.96 19.47L8.89 20.53L7.13 17.35L3.94 15.58L5 14.5L7.5 14.87L11.37 11L3.94 7.09L5.36 5.68L14.55 7.8L18.44 3.91C19 3.33 20 3.33 20.56 3.91Z' fill='#eeeeee' /><rect x='942' y='111' width='25' height='2' fill='#eee'/><circle cx='1054.3' cy='83.6' r='2.2' fill='#eee'/><circle cx='1049.6' cy='83.6' r='2.4' stroke='#40414d' stroke-width='1.3' fill='#eee'/><path d='M1044.8,91 Q1045,87 1049.5,87 Q1054,87 1054.1,91 Z' fill='#eee'/><path d='M1054.9,87.3 Q1058,87.8 1058,91 H1055.6 Q1055.6,88.5 1054.9,87.3 Z' fill='#eee'/><path transform='translate(1159.6,84.6) scale(0.69)' d='M12,19.2C9.5,19.2 7.29,17.92 6,16C6.03,14 10,12.9 12,12.9C14,12.9 17.97,14 18,16C16.71,17.920 14.5,19.2 12,19.2M12,5A3,3 0 0,1 15,8A3,3 0 0,1 12,11A3,3 0 0,1 9,8A3,3 0 0,1 12,5M12,2A10,10 0 0,0 2,12A10,10 0 0,0 12,22A10,10 0 0,0 22,12C22,6.47 17.5,2 12,2Z' fill='#eeeeee' /><rect x='1257.1' y='86.9' width='9.9' height='13.2' rx='1.2' fill='#eee'/><rect x='1261.1' y='86.9' width='2.9' height='1.8' fill='#2a2a33'/><rect x='1261.8' y='85.3' width='1.4' height='3' rx='0.7' fill='#eee'/><circle cx='1262.6' cy='91.4' r='1.1' fill='#2a2a33'/><rect x='1259.2' y='94' width='5.7' height='1' fill='#2a2a33'/><rect x='1259.2' y='95.6' width='5.7' height='3' fill='#9a9a9e'/><rect x='1353.9' y='88.8' width='11.1' height='8.2' rx='0.8' fill='#eee'/><path d='M1355.3,90.3 L1359.4,92.6 L1363.8,90.3' stroke='#432d33' stroke-width='1' fill='none'/><rect x='1350.3' y='90' width='2' height='1' fill='#eee'/><rect x='1349.9' y='92.3' width='2.4' height='1.4' fill='#bbb'/><rect x='1349' y='95.2' width='3.3' height='1.1' fill='#eee'/><circle cx='1374' cy='93' r='3' fill='#a04343'/><rect x='1445.0' y='87.5' width='2.9' height='2.8' fill='#eee'/><rect x='1445.0' y='91.1' width='2.9' height='2.8' fill='#eee'/><rect x='1445.0' y='94.7' width='2.9' height='2.8' fill='#eee'/><rect x='1448.9' y='87.5' width='2.9' height='2.8' fill='#eee'/><rect x='1448.9' y='91.1' width='2.9' height='2.8' fill='#eee'/><rect x='1448.9' y='94.7' width='2.9' height='2.8' fill='#eee'/><rect x='1452.8' y='87.5' width='2.9' height='2.8' fill='#eee'/><rect x='1452.8' y='91.1' width='2.9' height='2.8' fill='#eee'/><rect x='1452.8' y='94.7' width='2.9' height='2.8' fill='#eee'/><path transform='translate(387.9,207.1) scale(0.63)' d='M10,20V14H14V20H19V12H22L12,3L2,12H5V20H10Z' fill='#eeeeee' /><path transform='translate(557.2,206.7) scale(0.63)' d='M20.56 3.91C21.15 4.5 21.15 5.45 20.56 6.03L16.67 9.92L18.79 19.11L17.38 20.53L13.5 13.1L9.6 17L9.96 19.47L8.89 20.53L7.13 17.35L3.94 15.58L5 14.5L7.5 14.87L11.37 11L3.94 7.09L5.36 5.68L14.55 7.8L18.44 3.91C19 3.33 20 3.33 20.56 3.91Z' fill='#eeeeee' /><path transform='translate(693.9,207.3) scale(0.635)' d='M22.7,19L13.6,9.9C14.5,7.6 14,4.9 12.1,3C10.1,1 7.1,0.6 4.7,1.7L9,6L6,9L1.6,4.7C0.4,7.1 0.9,10.1 2.9,12.1C4.8,14 7.5,14.5 9.8,13.6L18.9,22.7C19.3,23.1 19.9,23.1 20.3,22.7L22.6,20.4C23.1,20 23.1,19.3 22.7,19Z' fill='#eeeeee' /><path transform='translate(844.8,206.9) scale(0.6)' d='M21.82,15.42L19.32,19.75C18.83,20.61 17.92,21.06 17,21H15V23L12.5,18.5L15,14V16H17.82L15.6,12.15L19.93,9.65L21.73,12.77C22.25,13.54 22.32,14.57 21.82,15.42M9.21,3.06H14.21C15.19,3.06 16.04,3.63 16.45,4.45L17.45,6.19L19.18,5.19L16.54,9.6H11.39L13.12,8.6L11.71,6.15L9.5,10L5.16,7.5L6.96,4.38C7.37,3.63 8.22,3.06 9.21,3.06M5.05,19.76L2.55,15.43C2.06,14.58 2.13,13.56 2.64,12.79L3.64,11.06L1.91,10.06L7.05,10.14L9.63,14.6L7.9,13.6L6.5,16.04H10.91V21H7.3C6.35,21 5.5,20.5 5.05,19.76Z' fill='#eeeeee' /><path d='M1010.9,220.9 L1010.9,211.9 L1013.6,214.2 L1013.9,211.9 L1016.6,214.2 L1016.9,211.9 L1019.8,214.6 L1020.9,214.6 L1020.9,207.8 L1024,207.8 L1024,220.9 Z' fill='#eee'/><rect x='1012.3' y='216.1' width='6.5' height='0.9' fill='#2a2a33'/><rect x='1020.2' y='216.1' width='2.5' height='0.9' fill='#2a2a33'/><rect x='1012.3' y='218.2' width='2.5' height='1.6' fill='#888'/><rect x='1015.8' y='218.2' width='2.5' height='1.6' fill='#888'/><rect x='1020.2' y='218.2' width='2.5' height='1.6' fill='#888'/><path d='M1285,220.1 H1276.6 Q1275.4,220.1 1275.4,218.9 V210 Q1275.4,208.8 1276.6,208.8 H1280.8 L1285,212.6' stroke='#eee' stroke-width='1.5' fill='none'/><path d='M1280,209 L1285,212.7 H1280 Z' fill='#eee'/><path d='M1282.3,218.6 L1288.3,212.6' stroke='#eee' stroke-width='2'/><path d='M1277.3,219 V216.3 M1278.6,219 V217.5 Q1279.7,216.6 1280.6,217.5 V219' stroke='#ddd' stroke-width='0.9' fill='none'/><path transform='translate(1391.1,206.8) scale(0.6)' d='M5.5,21C4.72,21 4.04,20.55 3.71,19.9V19.9L1.1,10.44L1,10A1,1 0 0,1 2,9H6.58L11.18,2.43C11.36,2.17 11.66,2 12,2C12.34,2 12.65,2.17 12.83,2.44L17.42,9H22A1,1 0 0,1 23,10L22.96,10.29L20.29,19.9C19.96,20.55 19.28,21 18.5,21H5.5M12,4.74L9,9H15L12,4.74M12,13A2,2 0 0,0 10,15A2,2 0 0,0 12,17A2,2 0 0,0 14,15A2,2 0 0,0 12,13Z' fill='#eeeeee' /><path transform='translate(41,296.9) scale(0.63)' d='M14.76,20.83L17.6,18L14.76,15.17L16.17,13.76L19,16.59L21.83,13.76L23.24,15.17L20.41,18L23.24,20.83L21.83,22.24L19,19.41L16.17,22.24L14.76,20.83M12,12V19.88C12.04,20.18 11.94,20.5 11.71,20.71C11.32,21.1 10.69,21.1 10.3,20.71L8.29,18.7C8.06,18.47 7.96,18.16 8,17.87V12H7.97L2.21,4.62C1.87,4.19 1.95,3.56 2.38,3.22C2.57,3.08 2.78,3 3,3V3H17V3C17.22,3 17.43,3.08 17.62,3.22C18.05,3.56 18.13,4.19 17.79,4.62L12.03,12H12Z' fill='#eeeeee' /><path transform='translate(240.6,296.9) scale(0.64)' d='M14,12V19.88C14.04,20.18 13.94,20.5 13.71,20.71C13.32,21.1 12.69,21.1 12.3,20.71L10.29,18.7C10.06,18.47 9.96,18.16 10,17.87V12H9.97L4.21,4.62C3.87,4.19 3.95,3.56 4.38,3.22C4.57,3.08 4.78,3 5,3V3H19V3C19.22,3 19.43,3.08 19.62,3.22C20.05,3.560 20.13,4.19 19.79,4.62L14.03,12H14Z' fill='#eeeeee' /><path transform='translate(442.6,296.9) scale(0.64)' d='M14,12V19.88C14.04,20.18 13.94,20.5 13.71,20.71C13.32,21.1 12.69,21.1 12.3,20.71L10.29,18.7C10.06,18.47 9.96,18.16 10,17.87V12H9.97L4.21,4.62C3.87,4.19 3.95,3.56 4.38,3.22C4.57,3.08 4.78,3 5,3V3H19V3C19.22,3 19.43,3.08 19.62,3.22C20.05,3.560 20.13,4.19 19.79,4.62L14.03,12H14Z' fill='#eeeeee' /><path transform='translate(645.6,296.9) scale(0.64)' d='M14,12V19.88C14.04,20.18 13.94,20.5 13.71,20.71C13.32,21.1 12.69,21.1 12.3,20.71L10.29,18.7C10.06,18.47 9.96,18.16 10,17.87V12H9.97L4.21,4.62C3.87,4.19 3.95,3.56 4.38,3.22C4.57,3.08 4.78,3 5,3V3H19V3C19.22,3 19.43,3.08 19.62,3.22C20.05,3.560 20.13,4.19 19.79,4.62L14.03,12H14Z' fill='#eeeeee' /><path transform='translate(847.6,296.9) scale(0.64)' d='M14,12V19.88C14.04,20.18 13.94,20.5 13.71,20.71C13.32,21.1 12.69,21.1 12.3,20.71L10.29,18.7C10.06,18.47 9.96,18.16 10,17.87V12H9.97L4.21,4.62C3.87,4.19 3.95,3.56 4.38,3.22C4.57,3.08 4.78,3 5,3V3H19V3C19.22,3 19.43,3.08 19.62,3.22C20.05,3.560 20.13,4.19 19.79,4.62L14.03,12H14Z' fill='#eeeeee' /><path transform='translate(1050.6,296.9) scale(0.64)' d='M14,12V19.88C14.04,20.18 13.94,20.5 13.71,20.71C13.32,21.1 12.69,21.1 12.3,20.71L10.29,18.7C10.06,18.47 9.96,18.16 10,17.87V12H9.97L4.21,4.62C3.87,4.19 3.95,3.56 4.38,3.22C4.57,3.08 4.78,3 5,3V3H19V3C19.22,3 19.43,3.08 19.62,3.22C20.05,3.560 20.13,4.19 19.79,4.62L14.03,12H14Z' fill='#eeeeee' /><path transform='translate(1248.2,296.8) scale(0.685)' d='M12,2C17.53,2 22,6.47 22,12C22,17.53 17.530,22 12,22C6.47,22 2,17.53 2,12C2,6.47 6.47,2 12,2M15.59,7L12,10.59L8.41,7L7,8.41L10.59,12L7,15.59L8.41,17L12,13.41L15.59,17L17,15.59L13.41,12L17,8.41L15.59,7Z' fill='#5f5f62' /><path d='M1266.8,302.5 L1275.2,302.5 L1271,307.3 Z' fill='#eee'/><path transform='translate(1380.4,296.4) scale(0.71)' d='M10,4V8H14V4H10M16,4V8H20V4H16M16,10V14H20V10H16M16,16V20H20V16H16M14,20V16H10V20H14M8,20V16H4V20H8M8,14V10H4V14H8M8,8V4H4V8H8M10,14H14V10H10V14M4,2H20A2,2 0 0,1 22,4V20A2,2 0 0,1 20,22H4C2.89,22 2,21.1 2,20V4A2,2 0 0,1 4,2Z' fill='#eeeeee' /><path d='M1460,302.6 H1465 M1460,307.2 H1465' stroke='#eee' stroke-width='1.4'/><path d='M1466.2,302.2 L1468.2,304.2 L1472.8,299.6' stroke='#eee' stroke-width='1.4' fill='none'/><path d='M1467.2,305.7 L1472.6,311 M1472.6,305.7 L1467.2,311' stroke='#eee' stroke-width='1.4'/><g transform='translate(269.2,353.3)'><path d='M6.56,2.46 L12,2.46 L12,0.2 L16.4,4.83 L12,9.5 L12,7.2 L6.56,7.2 Z' fill='#e6e6e6'/><path d='M9.7,8.75 L5,8.75 L5,6.25 L0.3,11 L5,15.5 L5,13 L9.7,13 Z' fill='#e6e6e6'/></g><path transform='translate(76.9,638) scale(0.67)' d='M3,6H21V18H3V6M12,9A3,3 0 0,1 15,12A3,3 0 0,1 12,15A3,3 0 0,1 9,12A3,3 0 0,1 12,9M7,8A2,2 0 0,1 5,10V14A2,2 0 0,1 7,16H17A2,2 0 0,1 19,14V10A2,2 0 0,1 17,8H7Z' fill='#e6e6e6' /><path transform='translate(201.3,638) scale(0.67)' d='M12,9A3,3 0 0,0 9,12A3,3 0 0,0 12,15A3,3 0 0,0 15,12A3,3 0 0,0 12,9M12,17A5,5 0 0,1 7,12A5,5 0 0,1 12,7A5,5 0 0,1 17,12A5,5 0 0,1 12,17M12,4.5C7,4.5 2.73,7.61 1,12C2.73,16.39 7,19.5 12,19.5C17,19.5 21.27,16.39 23,12C21.27,7.61 17,4.5 12,4.5Z' fill='#e6e6e6' /><path transform='translate(366.9,638) scale(0.67)' d='M3,6H21V18H3V6M12,9A3,3 0 0,1 15,12A3,3 0 0,1 12,15A3,3 0 0,1 9,12A3,3 0 0,1 12,9M7,8A2,2 0 0,1 5,10V14A2,2 0 0,1 7,16H17A2,2 0 0,1 19,14V10A2,2 0 0,1 17,8H7Z' fill='#e6e6e6' /><path transform='translate(491.3,638) scale(0.67)' d='M12,9A3,3 0 0,0 9,12A3,3 0 0,0 12,15A3,3 0 0,0 15,12A3,3 0 0,0 12,9M12,17A5,5 0 0,1 7,12A5,5 0 0,1 12,7A5,5 0 0,1 17,12A5,5 0 0,1 12,17M12,4.5C7,4.5 2.73,7.61 1,12C2.73,16.39 7,19.5 12,19.5C17,19.5 21.27,16.39 23,12C21.27,7.61 17,4.5 12,4.5Z' fill='#e6e6e6' /><path transform='translate(656.9,638) scale(0.67)' d='M3,6H21V18H3V6M12,9A3,3 0 0,1 15,12A3,3 0 0,1 12,15A3,3 0 0,1 9,12A3,3 0 0,1 12,9M7,8A2,2 0 0,1 5,10V14A2,2 0 0,1 7,16H17A2,2 0 0,1 19,14V10A2,2 0 0,1 17,8H7Z' fill='#e6e6e6' /><path transform='translate(781.3,638) scale(0.67)' d='M12,9A3,3 0 0,0 9,12A3,3 0 0,0 12,15A3,3 0 0,0 15,12A3,3 0 0,0 12,9M12,17A5,5 0 0,1 7,12A5,5 0 0,1 12,7A5,5 0 0,1 17,12A5,5 0 0,1 12,17M12,4.5C7,4.5 2.73,7.61 1,12C2.73,16.39 7,19.5 12,19.5C17,19.5 21.27,16.39 23,12C21.27,7.61 17,4.5 12,4.5Z' fill='#e6e6e6' /><g transform='translate(1139.2,353.3)'><path d='M6.56,2.46 L12,2.46 L12,0.2 L16.4,4.83 L12,9.5 L12,7.2 L6.56,7.2 Z' fill='#e6e6e6'/><path d='M9.7,8.75 L5,8.75 L5,6.25 L0.3,11 L5,15.5 L5,13 L9.7,13 Z' fill='#e6e6e6'/></g><path transform='translate(946.9,638) scale(0.67)' d='M3,6H21V18H3V6M12,9A3,3 0 0,1 15,12A3,3 0 0,1 12,15A3,3 0 0,1 9,12A3,3 0 0,1 12,9M7,8A2,2 0 0,1 5,10V14A2,2 0 0,1 7,16H17A2,2 0 0,1 19,14V10A2,2 0 0,1 17,8H7Z' fill='#e6e6e6' /><path transform='translate(1071.3,638) scale(0.67)' d='M12,9A3,3 0 0,0 9,12A3,3 0 0,0 12,15A3,3 0 0,0 15,12A3,3 0 0,0 12,9M12,17A5,5 0 0,1 7,12A5,5 0 0,1 12,7A5,5 0 0,1 17,12A5,5 0 0,1 12,17M12,4.5C7,4.5 2.73,7.61 1,12C2.73,16.39 7,19.5 12,19.5C17,19.5 21.27,16.39 23,12C21.27,7.61 17,4.5 12,4.5Z' fill='#e6e6e6' /><path transform='translate(1214.4,356.7) scale(0.657)' d='M20.56 3.91C21.15 4.5 21.15 5.45 20.56 6.03L16.67 9.92L18.79 19.11L17.38 20.53L13.5 13.1L9.6 17L9.96 19.47L8.89 20.53L7.13 17.35L3.94 15.58L5 14.5L7.5 14.87L11.37 11L3.94 7.09L5.36 5.68L14.55 7.8L18.44 3.91C19 3.33 20 3.33 20.56 3.91Z' fill='#e6e6e6' /><circle cx='1228' cy='369.4' r='3.9' fill='#393943'/><circle cx='1228' cy='369.4' r='2.35' stroke='#e6e6e6' stroke-width='1.2' fill='none'/><path d='M1229.8,371.2 L1232.3,373.7' stroke='#e6e6e6' stroke-width='1.4'/><path transform='translate(1214.4,606.7) scale(0.657)' d='M20.56 3.91C21.15 4.5 21.15 5.45 20.56 6.03L16.67 9.92L18.79 19.11L17.38 20.53L13.5 13.1L9.6 17L9.96 19.47L8.89 20.53L7.13 17.35L3.94 15.58L5 14.5L7.5 14.87L11.37 11L3.94 7.09L5.36 5.68L14.55 7.8L18.44 3.91C19 3.33 20 3.33 20.56 3.91Z' fill='#e6e6e6' /><circle cx='1228' cy='619.4' r='3.9' fill='#393943'/><circle cx='1228' cy='619.4' r='2.35' stroke='#e6e6e6' stroke-width='1.2' fill='none'/><path d='M1229.8,621.2 L1232.3,623.7' stroke='#e6e6e6' stroke-width='1.4'/></svg>
</div></div></body></html>
